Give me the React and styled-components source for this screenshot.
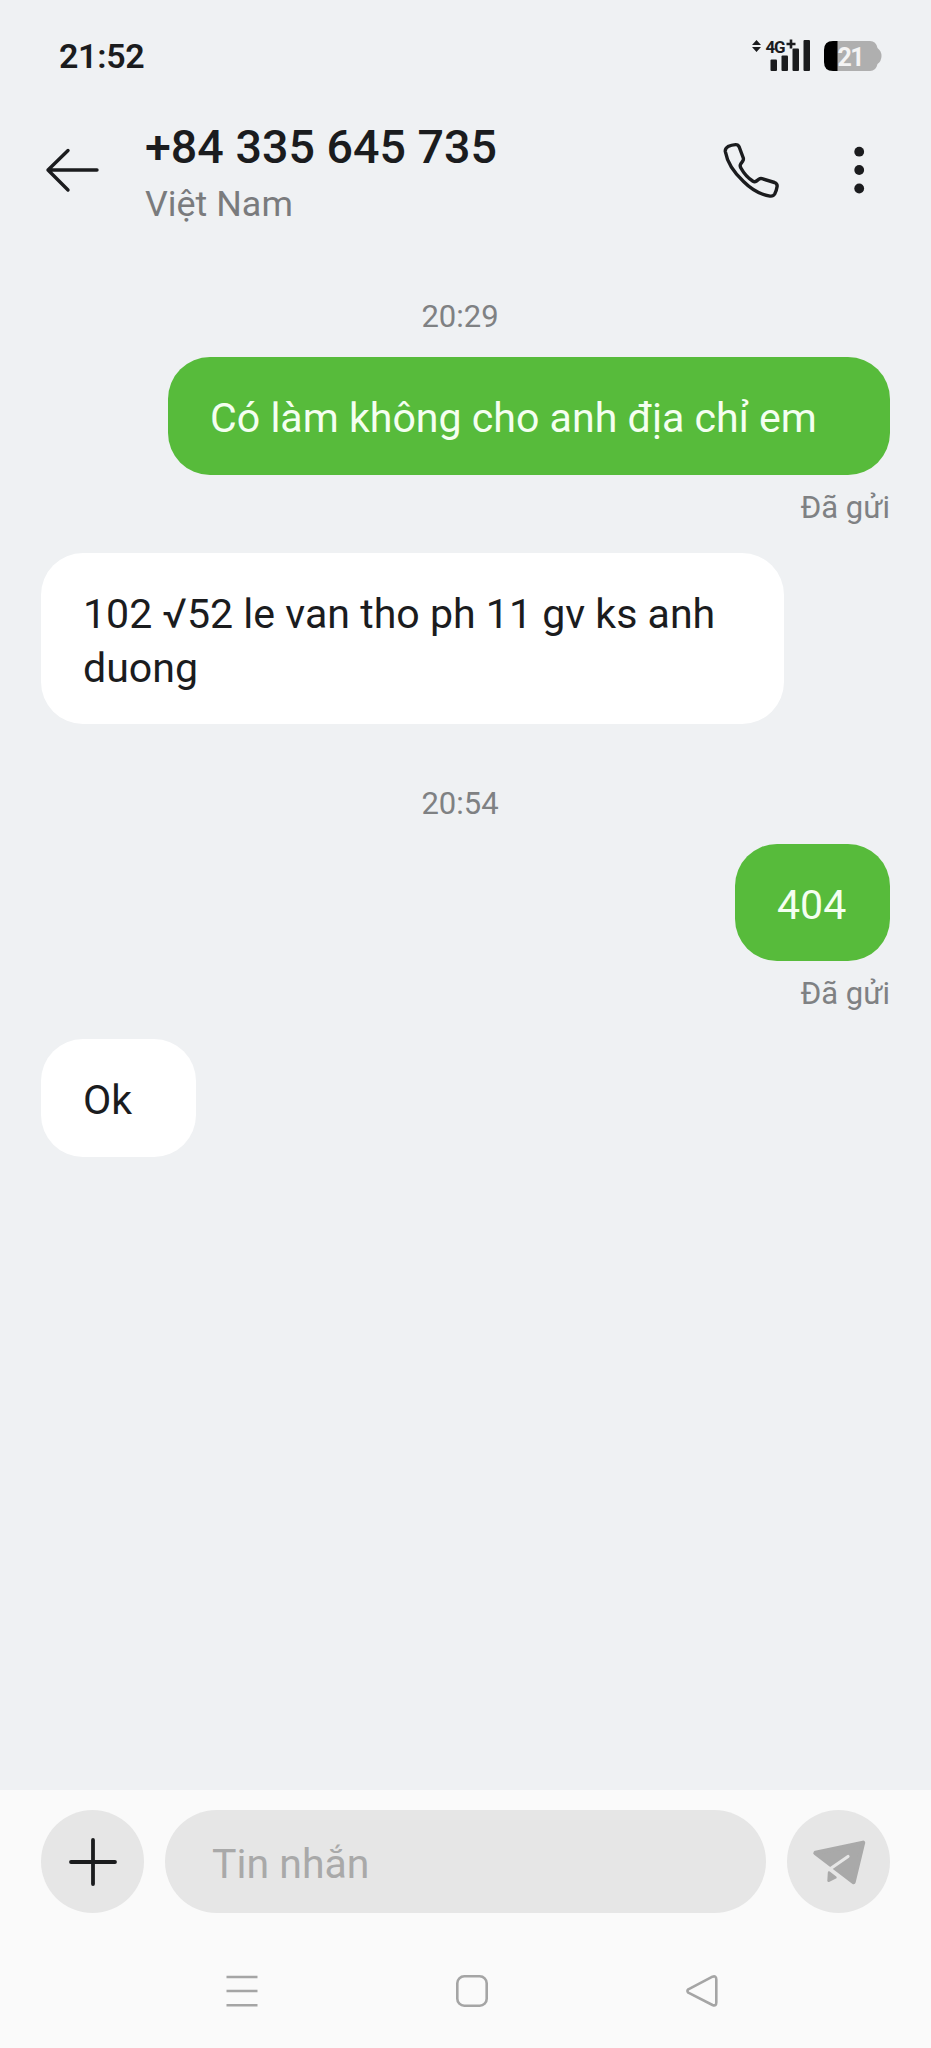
import React from 'react';
import styled, { createGlobalStyle } from 'styled-components';

const GlobalStyle = createGlobalStyle`
  * {
    box-sizing: border-box;
  }
  body {
    margin: 0;
    background: #eff1f3;
    font-family: Roboto, "Noto Sans", sans-serif;
    color: #1b1c1e;
  }
`

const Screen = styled.div`
  width: 931px;
  height: 2048px;
  display: flex;
  flex-direction: column;
  background: #eff1f3;
  overflow: hidden;
`

const StatusBar = styled.div`
  height: 112px;
  padding: 0 49px 0 59px;
  display: flex;
  align-items: center;
  justify-content: space-between;
`

const Clock = styled.span`
  font-size: 34px;
  line-height: 40px;
  font-weight: 600;
  letter-spacing: -.3px;
`

const StatusIcons = styled.div`
  display: flex;
  align-items: center;
  gap: 12px;
`

const Header = styled.header`
  height: 116px;
  padding: 0 45px 0 43px;
  display: flex;
  align-items: center;
`

const IconButton = styled.button`
  display: flex;
  padding: 0;
  border: 0;
  background: none;
`

const Contact = styled.div`
  flex: 1;
  padding: 9px 0 0 43px;
`

const Phone = styled.h1`
  margin: 0;
  font-size: 46.6px;
  line-height: 60px;
  font-weight: 500;
`

const Country = styled.p`
  margin: 0;
  font-size: 35.9px;
  line-height: 55px;
  color: #7a7b7d;
`

const Actions = styled.div`
  display: flex;
  gap: 59px;
`

const Thread = styled.main`
  flex: 1;
  padding: 69px 41px 0;
  display: flex;
  flex-direction: column;
`

const Time = styled.time`
  align-self: center;
  margin: ${p => p.$spaced ? '60px 11px 19.5px 0' : '0 11px 20px 0'};
  font-size: 31px;
  line-height: 40px;
  color: #7f8183;
`

const Bubble = styled.div`
  align-self: ${p => p.$sent ? 'flex-end' : 'flex-start'};
  width: ${p => p.$width}px;
  padding: 34px 42px 29.5px;
  border-radius: 42px;
  background: ${p => p.$sent ? '#57bb3b' : '#fff'};
  color: ${p => p.$sent ? '#f4fff0' : '#1b1c1e'};
  font-size: 41.1px;
  line-height: 54px;
`

const Status = styled.span`
  align-self: flex-end;
  margin: 13px 0 25px;
  font-size: 31px;
  line-height: 40px;
  color: #7f8183;
`

const Footer = styled.footer`
  height: 258px;
  padding: 20px 41px 0;
  background: #fafafa;
`

const Composer = styled.div`
  display: flex;
  gap: 21px;
`

const RoundButton = styled.button`
  width: 103px;
  height: 103px;
  padding: 0;
  border: 0;
  border-radius: 50%;
  display: flex;
  align-items: center;
  justify-content: center;
  background: #e6e6e6;
`

const Input = styled.div`
  flex: 1;
  height: 103px;
  padding: 4px 47px 0;
  border-radius: 52px;
  display: flex;
  align-items: center;
  background: #e6e6e6;
  color: #a9a9a9;
  font-size: 41px;
`

const NavBar = styled.nav`
  display: flex;
  justify-content: space-between;
  padding: 62px 172px 0 185px;
`

const SignalIcon = () => (
    <svg width="60" height="42" viewBox="0 -4 60 42" fill="#1b1c1e">
        <path d="M4.500 1 L9 6 H0 Z M4.500 13 L9 8 H0 Z" />
        <text x="13.500" y="13.500" fontFamily="Roboto, sans-serif" fontSize="17" fontWeight="700" textLength="20">4G</text>
        <path d="M37.700 0.500 h2.600 v3.200 h3.200 v2.600 h-3.200 v3.200 h-2.600 v-3.200 h-3.200 v-2.600 h3.200 Z" />
        <rect x="18.500" y="20.500" width="6.500" height="11.500" rx="1" />
        <rect x="29.500" y="16.500" width="6.500" height="15.500" rx="1" />
        <rect x="40.500" y="9.500" width="6.500" height="22.500" rx="1" />
        <rect x="51.500" y="1" width="6.500" height="31" rx="1" />
    </svg>
)

const BatteryIcon = () => (
    <svg width="58" height="34" viewBox="0 0 58 34">
        <path d="M9 2 H46 Q52 2 53.500 9 Q57.500 12 57.500 17 Q57.500 22 53.500 25 Q52 32 46 32 H9 Z" fill="#afafaf" />
        <path d="M13.500 2 H9 Q0 2 0 11 V23 Q0 32 9 32 H13.500 Z" fill="#000" />
        <text x="13.500" y="26.500" fill="#f4f4f4" fontFamily="Roboto, sans-serif" fontSize="25" fontWeight="700" textLength="27">21</text>
    </svg>
)

const BackIcon = () => (
    <svg width="59" height="50" viewBox="0 0 59 50" fill="none" stroke="#1b1c1e" strokeWidth="3.4" strokeLinecap="round" strokeLinejoin="round">
        <path d="M54 25 H5 M25 5.500 L5 25 L25 45" />
    </svg>
)

const CallIcon = () => (
    <svg width="60" height="60" viewBox="0 0 60 60" fill="none" stroke="#1b1c1e" strokeWidth="3.4" strokeLinejoin="round">
        <path d="M4.300 11.500 Q4 8.500 7 6.600 Q10.500 4.800 14.500 4.600 Q17.200 4.500 18.200 7 L22.300 18 Q22.700 19.500 21.800 21 L19.700 24 Q18.600 26 19.900 28 Q24.500 36.500 32 41.300 Q33.700 42.300 35.500 41 L38 39.200 Q39.300 38.300 41 38.700 L53.500 42.500 Q56.500 43.700 56.100 46.500 Q55.500 50.500 53.700 54 Q52.200 56.500 49 56.100 Q35 54 22.500 41.500 Q7 27 4.300 11.500 Z" />
    </svg>
)

const MoreIcon = () => (
    <svg width="46" height="60" viewBox="0 0 46 60" fill="#1b1c1e">
        <circle cx="19.200" cy="11.700" r="4.900" />
        <circle cx="19.200" cy="30" r="4.900" />
        <circle cx="19.200" cy="48.500" r="4.900" />
    </svg>
)

const PlusIcon = () => (
    <svg width="52" height="52" viewBox="0 0 52 52" stroke="#1b1c1e" strokeWidth="3.8" strokeLinecap="round">
        <path d="M26 4 V48 M4 26 H48" />
    </svg>
)

const SendIcon = () => (
    <svg width="56" height="48" viewBox="0 0 56 48" strokeLinejoin="round" strokeLinecap="round">
        <path d="M4.500 15 L52 4.800 L42.500 44 Z" fill="#a9a9a9" stroke="#a9a9a9" strokeWidth="4.4" />
        <path d="M37 18.500 L20 30.300" stroke="#e6e6e6" strokeWidth="3.2" />
        <path d="M18 34.500 L24.500 39.500 L17.500 42.800 Z" fill="#a9a9a9" stroke="#a9a9a9" strokeWidth="2.4" />
    </svg>
)

const navIcon = {
    width: 32,
    height: 32,
    viewBox: '0 0 32 32',
    fill: 'none',
    stroke: '#a5a5a5',
    strokeWidth: 2.6,
    strokeLinejoin: 'round',
}

const App = () => {
    return (
        <>
            <GlobalStyle />
            <Screen>
                <StatusBar>
                    <Clock>21:52</Clock>
                    <StatusIcons>
                        <SignalIcon />
                        <BatteryIcon />
                    </StatusIcons>
                </StatusBar>
                <Header>
                    <IconButton aria-label="Back"><BackIcon /></IconButton>
                    <Contact>
                        <Phone>+84 335 645 735</Phone>
                        <Country>Việt Nam</Country>
                    </Contact>
                    <Actions>
                        <IconButton aria-label="Call"><CallIcon /></IconButton>
                        <IconButton aria-label="More"><MoreIcon /></IconButton>
                    </Actions>
                </Header>
                <Thread>
                    <Time>20:29</Time>
                    <Bubble $sent $width={722}>Có làm không cho anh địa chỉ em</Bubble>
                    <Status>Đã gửi</Status>
                    <Bubble $width={743}>102 √52 le van tho ph 11 gv ks anh duong</Bubble>
                    <Time $spaced>20:54</Time>
                    <Bubble $sent $width={155}>404</Bubble>
                    <Status>Đã gửi</Status>
                    <Bubble $width={155}>Ok</Bubble>
                </Thread>
                <Footer>
                    <Composer>
                        <RoundButton aria-label="Add"><PlusIcon /></RoundButton>
                        <Input>Tin nhắn</Input>
                        <RoundButton aria-label="Send"><SendIcon /></RoundButton>
                    </Composer>
                    <NavBar>
                        <svg {...navIcon}><path d="M0.500 2 H31.500 M0.500 16 H31.500 M0.500 30.200 H31.500" /></svg>
                        <svg {...navIcon}><rect x="1.300" y="1.300" width="29.400" height="29.400" rx="7" /></svg>
                        <svg {...navIcon}><path d="M2.300 14.300 L26.500 1.700 Q30.300 0.500 30.300 4.500 V27.500 Q30.300 31.500 26.500 30 L2.300 17.700 Q0.500 16 2.300 14.300 Z" /></svg>
                    </NavBar>
                </Footer>
            </Screen>
        </>
    );
};

export default App;
